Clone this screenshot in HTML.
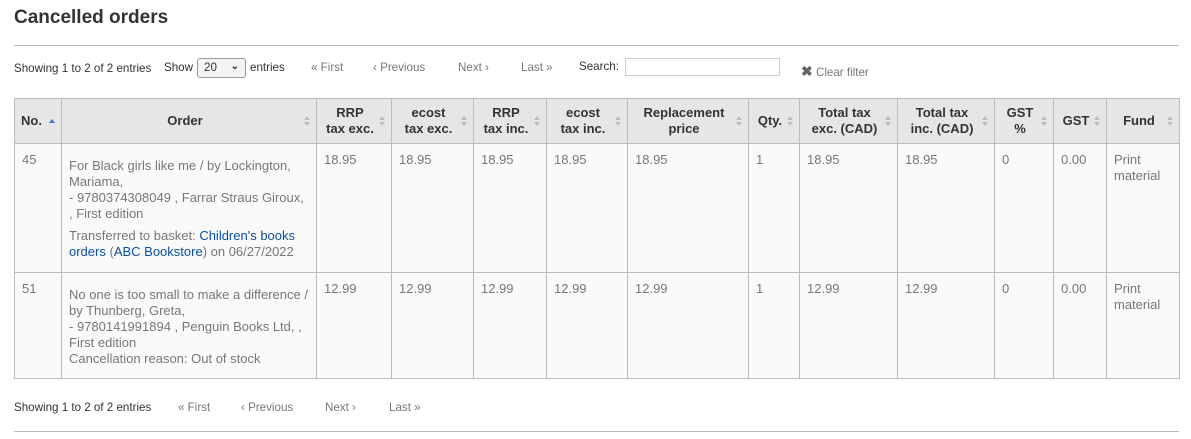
<!DOCTYPE html>
<html><head><style>
body{margin:0;background:#fff;font-family:"Liberation Sans",sans-serif;color:#333;width:1191px;height:439px;overflow:hidden;position:relative}
.a{position:absolute;white-space:nowrap}
h1{position:absolute;left:14px;top:7px;margin:0;font-size:19px;font-weight:bold;color:#333}
.hr{position:absolute;left:14px;width:1165px;height:1px;background:#bbb}
.sm{font-size:11.6px;color:#333}
.pg{font-size:11.6px;color:#777}
table{position:absolute;left:14px;top:98px;border-collapse:collapse;table-layout:fixed;width:1166px}
td,th{border:1px solid #bcbcbc;font-size:13px;line-height:16px}
th{background:#e6e6e6;font-weight:bold;color:#333;height:44px;padding:0 14px 0 6px;position:relative;text-align:center}
th::after{content:"";position:absolute;right:6px;top:17px;width:0;height:0;border-left:3.5px solid transparent;border-right:3.5px solid transparent;border-bottom:4px solid #bbb}
th::before{content:"";position:absolute;right:6px;top:23px;width:0;height:0;border-left:3.5px solid transparent;border-right:3.5px solid transparent;border-top:4px solid #bbb}
th.s::after{border-bottom-color:#3a7bd5;top:20px}
th.s::before{display:none}
td{background:#fafafa;color:#777;vertical-align:top;padding:8px 7px 7px}
a{color:#0a4f9c;text-decoration:none}
</style></head><body>
<h1>Cancelled orders</h1>
<div class="hr" style="top:45px"></div>
<div class="a sm" style="left:14px;top:62px">Showing 1 to 2 of 2 entries</div>
<div class="a sm" style="left:164px;top:61px">Show</div>
<div class="a" style="left:197px;top:58px;width:49px;height:20px;border:1px solid #999;border-radius:3px;background:#f4f4f4;font-size:11.6px;line-height:18px;box-sizing:border-box;padding-left:6px">20<span style="position:absolute;right:6px;top:-1px;font-size:10px;font-weight:bold">&#8964;</span></div>
<div class="a sm" style="left:250px;top:61px">entries</div>
<div class="a pg" style="left:311px;top:61px">« First</div>
<div class="a pg" style="left:373px;top:61px">‹ Previous</div>
<div class="a pg" style="left:458px;top:61px">Next ›</div>
<div class="a pg" style="left:521px;top:61px">Last »</div>
<div class="a sm" style="left:579px;top:60px">Search:</div>
<div class="a" style="left:625px;top:58px;width:155px;height:18px;border:1px solid #ccc;box-sizing:border-box"></div>
<div class="a pg" style="left:801px;top:63px"><b style="color:#666;font-size:14px">✖</b> Clear filter</div>
<table>
<colgroup><col style="width:47px"><col style="width:255px"><col style="width:75px"><col style="width:82px"><col style="width:73px"><col style="width:81px"><col style="width:121px"><col style="width:51px"><col style="width:98px"><col style="width:97px"><col style="width:59px"><col style="width:53px"><col style="width:73px"></colgroup>
<tr><th class="s" style="text-align:left">No.</th><th>Order</th><th>RRP<br>tax exc.</th><th>ecost<br>tax exc.</th><th>RRP<br>tax inc.</th><th>ecost<br>tax inc.</th><th>Replacement<br>price</th><th>Qty.</th><th>Total tax<br>exc. (CAD)</th><th>Total tax<br>inc. (CAD)</th><th>GST<br>%</th><th>GST</th><th>Fund</th></tr>
<tr style="height:129px"><td>45</td><td style="padding-top:14px">For Black girls like me / by Lockington, Mariama,<br>- 9780374308049 , Farrar Straus Giroux, , First edition<div style="margin-top:6px">Transferred to basket: <a>Children's books orders</a> (<a>ABC Bookstore</a>) on 06/27/2022</div></td><td>18.95</td><td>18.95</td><td>18.95</td><td>18.95</td><td>18.95</td><td>1</td><td>18.95</td><td>18.95</td><td>0</td><td>0.00</td><td>Print material</td></tr>
<tr style="height:106px"><td>51</td><td style="padding-top:14px">No one is too small to make a difference / by Thunberg, Greta,<br>- 9780141991894 , Penguin Books Ltd, , First edition<br>Cancellation reason: Out of stock</td><td>12.99</td><td>12.99</td><td>12.99</td><td>12.99</td><td>12.99</td><td>1</td><td>12.99</td><td>12.99</td><td>0</td><td>0.00</td><td>Print material</td></tr>
</table>
<div class="a sm" style="left:14px;top:401px">Showing 1 to 2 of 2 entries</div>
<div class="a pg" style="left:178px;top:401px">« First</div>
<div class="a pg" style="left:241px;top:401px">‹ Previous</div>
<div class="a pg" style="left:325px;top:401px">Next ›</div>
<div class="a pg" style="left:389px;top:401px">Last »</div>
<div class="hr" style="top:431px"></div>
</body></html>
